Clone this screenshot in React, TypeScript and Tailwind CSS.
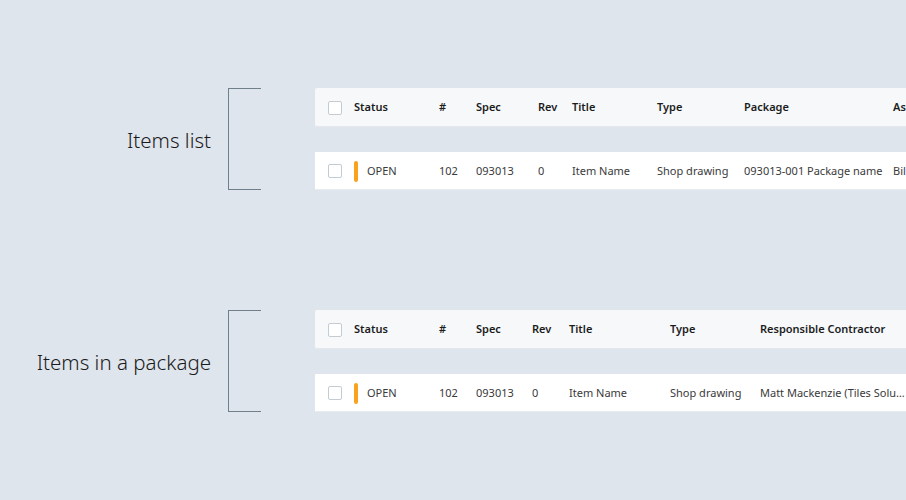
import React from 'react';

type Col = { label: string; w: string };

const listCols: Col[] = [
  { label: 'Status', w: 'w-[85px]' },
  { label: '#', w: 'w-[37px]' },
  { label: 'Spec', w: 'w-[62px]' },
  { label: 'Rev', w: 'w-[34px]' },
  { label: 'Title', w: 'w-[85px]' },
  { label: 'Type', w: 'w-[87px]' },
  { label: 'Package', w: 'w-[149px]' },
  { label: 'Assignee', w: 'w-[120px]' },
];
const listRow = ['102', '093013', '0', 'Item Name', 'Shop drawing', '093013-001 Package name', 'Bill Jones'];

const packageCols: Col[] = [
  { label: 'Status', w: 'w-[85px]' },
  { label: '#', w: 'w-[37px]' },
  { label: 'Spec', w: 'w-[56px]' },
  { label: 'Rev', w: 'w-[37px]' },
  { label: 'Title', w: 'w-[101px]' },
  { label: 'Type', w: 'w-[90px]' },
  { label: 'Responsible Contractor', w: 'w-[146px]' },
];
const packageRow = ['102', '093013', '0', 'Item Name', 'Shop drawing', 'Matt Mackenzie (Tiles Solutions)'];

const Checkbox: React.FC = () => (
  <div className="w-[39px] shrink-0 pl-[13px]">
    <div className="w-[14px] h-[14px] rounded-[2px] border border-[#c3cbd3] bg-white" />
  </div>
);

const Table: React.FC<{ cols: Col[]; row: string[] }> = ({ cols, row }) => (
  <div className="flex-1 overflow-hidden">
    <div className="w-[1000px]">
      <div className="flex items-center h-[39px] pt-[1px] bg-[#f6f8fa] rounded-l-[2px] border-b border-[#e4e8ec] text-[11px] font-semibold text-[#1c1c1c]">
        <Checkbox />
        {cols.map((c) => (
          <div key={c.label} className={`${c.w} shrink-0 whitespace-nowrap`}>
            {c.label}
          </div>
        ))}
      </div>
      <div className="flex items-center h-[38px] mt-[25px] pt-[1px] bg-white border-b border-[#e8ecef] text-[11px] text-[#3a3a3a]">
        <Checkbox />
        <div className={`${cols[0].w} shrink-0 flex items-center`}>
          <div className="w-[4px] h-[21px] rounded-[2px] bg-[#f9a21e] mr-[9px]" />
          <span>OPEN</span>
        </div>
        {row.map((v, i) => (
          <div key={i} className={`${cols[i + 1].w} shrink-0 whitespace-nowrap overflow-hidden text-ellipsis`}>
            {v}
          </div>
        ))}
      </div>
    </div>
  </div>
);

const Section: React.FC<{ label: string; cols: Col[]; row: string[] }> = ({ label, cols, row }) => (
  <div className="flex items-center">
    <div className="w-[211px] shrink-0 text-right text-[20.5px] text-[#1a1a1a] font-light pt-[2px]">{label}</div>
    <div className="ml-[17px] w-[33px] h-[102px] shrink-0 border-l-[1.5px] border-y-[1.5px] border-[#6f7f8b]" />
    <div className="ml-[54px] flex-1 flex overflow-hidden">
      <Table cols={cols} row={row} />
    </div>
  </div>
);

const App: React.FC = () => (
  <div
    className="w-[906px] h-[500px] bg-[#dfe5ec] overflow-hidden pt-[88px]"
    style={{ fontFamily: '"Noto Sans", "Open Sans", sans-serif' }}
  >
    <Section label="Items list" cols={listCols} row={listRow} />
    <div className="h-[120px]" />
    <Section label="Items in a package" cols={packageCols} row={packageRow} />
  </div>
);

export default App;
